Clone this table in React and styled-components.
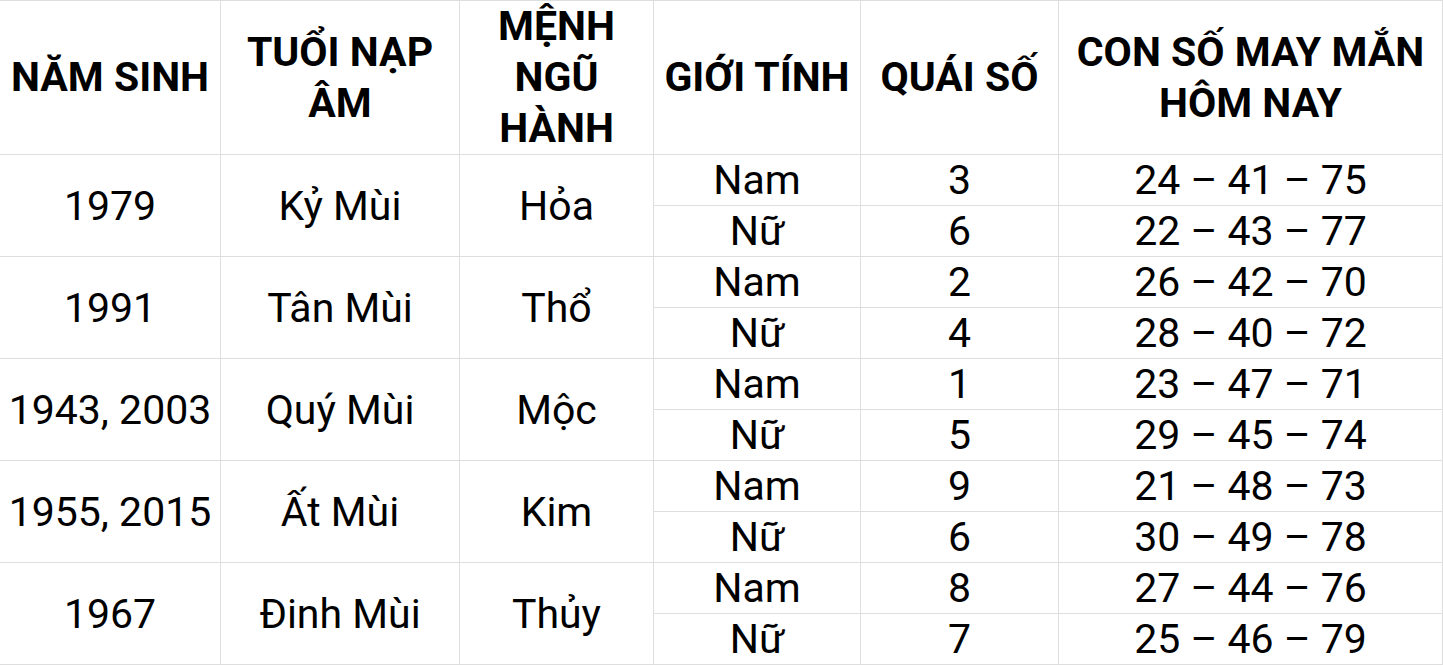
import React from "react";
import styled, { createGlobalStyle } from "styled-components";

const Global = createGlobalStyle`
  html, body { margin: 0; padding: 0; background: #fff; }
  body { font-family: Roboto, "Liberation Sans", Arial, sans-serif; color: #000; }
`;

const Table = styled.div`
  display: grid;
  grid-template-columns: 220px 238px 193px 206px 197px 383px;
  grid-template-rows: 153px repeat(10, 50px);
  gap: 1px;
  padding: 1px 1px 1px 0;
  background: #dedede;
  width: 1443px;
  box-sizing: border-box;
`;

const Cell = styled.div`
  background: #fff;
  display: flex;
  align-items: center;
  justify-content: center;
  text-align: center;
  font-size: 41px;
  font-weight: ${(p) => (p.$head ? 700 : 400)};
  line-height: ${(p) => (p.$head ? "51px" : "44px")};
  grid-row: ${(p) => (p.$span ? `span ${p.$span}` : "auto")};
  white-space: pre-line;
`;

const headers = [
  "NĂM SINH",
  "TUỔI NẠP\nÂM",
  "MỆNH\nNGŨ\nHÀNH",
  "GIỚI TÍNH",
  "QUÁI SỐ",
  "CON SỐ MAY MẮN\nHÔM NAY",
];

const data = [
  { year: "1979", tuoi: "Kỷ Mùi", menh: "Hỏa", rows: [["3", "24 – 41 – 75"], ["6", "22 – 43 – 77"]] },
  { year: "1991", tuoi: "Tân Mùi", menh: "Thổ", rows: [["2", "26 – 42 – 70"], ["4", "28 – 40 – 72"]] },
  { year: "1943, 2003", tuoi: "Quý Mùi", menh: "Mộc", rows: [["1", "23 – 47 – 71"], ["5", "29 – 45 – 74"]] },
  { year: "1955, 2015", tuoi: "Ất Mùi", menh: "Kim", rows: [["9", "21 – 48 – 73"], ["6", "30 – 49 – 78"]] },
  { year: "1967", tuoi: "Đinh Mùi", menh: "Thủy", rows: [["8", "27 – 44 – 76"], ["7", "25 – 46 – 79"]] },
];

export default function App() {
  return (
    <>
      <Global />
      <Table>
        {headers.map((h) => (
          <Cell key={h} $head>{h}</Cell>
        ))}
        {data.map((d) => (
          <React.Fragment key={d.year}>
            <Cell $span={2}>{d.year}</Cell>
            <Cell $span={2}>{d.tuoi}</Cell>
            <Cell $span={2}>{d.menh}</Cell>
            <Cell>Nam</Cell>
            <Cell>{d.rows[0][0]}</Cell>
            <Cell>{d.rows[0][1]}</Cell>
            <Cell>Nữ</Cell>
            <Cell>{d.rows[1][0]}</Cell>
            <Cell>{d.rows[1][1]}</Cell>
          </React.Fragment>
        ))}
      </Table>
    </>
  );
}
